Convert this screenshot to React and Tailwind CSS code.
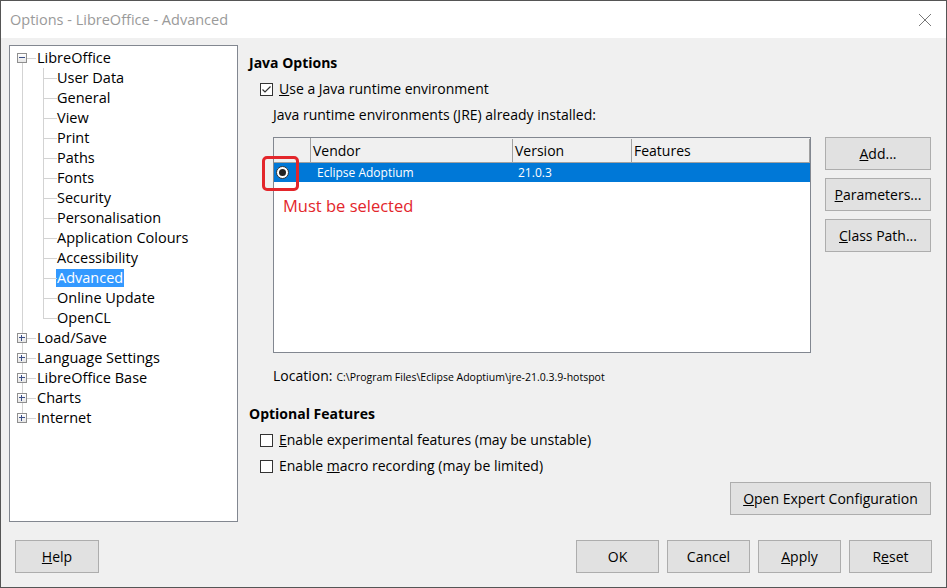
import React from "react"

const font = { fontFamily: '"Segoe UI", "Open Sans", "Noto Sans", sans-serif' }

const tree = [
  { label: "LibreOffice", top: true, open: true, first: true },
  { label: "User Data" },
  { label: "General" },
  { label: "View" },
  { label: "Print" },
  { label: "Paths" },
  { label: "Fonts" },
  { label: "Security" },
  { label: "Personalisation" },
  { label: "Application Colours" },
  { label: "Accessibility" },
  { label: "Advanced", selected: true },
  { label: "Online Update" },
  { label: "OpenCL", lastChild: true },
  { label: "Load/Save", top: true },
  { label: "Language Settings", top: true },
  { label: "LibreOffice Base", top: true },
  { label: "Charts", top: true },
  { label: "Internet", top: true, last: true },
]

function ExpandBox({ open }) {
  return (
    <div className="absolute left-[7px] top-[5px] w-[10px] h-[10px] border border-[#8f8f8f] bg-gradient-to-b from-white to-[#e6e6e6] flex items-center justify-center">
      <div className="relative w-[6px] h-[6px]">
        <div className="absolute left-0 top-[2px] w-[6px] h-[1px] bg-[#3b4f87]" />
        {!open && <div className="absolute left-[2px] top-0 w-[1px] h-[6px] bg-[#3b4f87]" />}
      </div>
    </div>
  )
}

function TreeRow({ item }) {
  const line = "absolute bg-[#d3d3d3]"
  return (
    <div className="flex h-[20px] items-center">
      <div className="relative w-[27px] h-[20px] shrink-0">
        {item.top ? (
          <>
            {!item.first && <div className={`${line} left-[12px] top-0 w-[1px] h-[5px]`} />}
            {!item.last && <div className={`${line} left-[12px] top-[15px] w-[1px] h-[5px]`} />}
            <div className={`${line} left-[17px] top-[10px] w-[9px] h-[1px]`} />
            <ExpandBox open={item.open} />
          </>
        ) : (
          <div className={`${line} left-[12px] top-0 w-[1px] h-[20px]`} />
        )}
      </div>
      {item.top ? (
        <span className="text-[14.5px] leading-[20px] text-black">{item.label}</span>
      ) : (
        <>
          <div className="relative w-[20px] h-[20px] shrink-0">
            <div className={`${line} left-[6px] top-0 w-[1px] ${item.lastChild ? "h-[11px]" : "h-[20px]"}`} />
            <div className={`${line} left-[6px] top-[10px] w-[14px] h-[1px]`} />
          </div>
          <span
            className={`text-[14.5px] leading-[18px] px-[1px] -ml-[1px] ${
              item.selected ? "bg-[#3399ff] text-white" : "text-black"
            }`}
          >
            {item.label}
          </span>
        </>
      )}
    </div>
  )
}

function CheckBox({ checked }) {
  return (
    <div className="w-[13px] h-[13px] border border-[#333] bg-white flex items-center justify-center shrink-0">
      {checked && (
        <svg width="11" height="11" viewBox="0 0 11 11">
          <path d="M1.5 5.5 L4 8 L9.5 2.5" fill="none" stroke="#333" strokeWidth="1.2" />
        </svg>
      )}
    </div>
  )
}

function Btn({ children, className = "" }) {
  return (
    <button
      className={`h-[33px] bg-[#e1e1e1] border border-[#adadad] text-[14px] text-black flex items-center justify-center ${className}`}
    >
      {children}
    </button>
  )
}

export default function App() {
  return (
    <div style={font} className="w-[947px] h-[588px] border border-[#555] bg-[#f0f0f0] flex flex-col overflow-hidden">
      {/* title bar */}
      <div className="h-[37px] bg-white flex items-center justify-between pl-[9px] pr-[14px] shrink-0">
        <span className="text-[14.5px] text-[#9a9a9a]">Options - LibreOffice - Advanced</span>
        <svg width="14" height="14" viewBox="0 0 14 14">
          <path d="M1 1 L13 13 M13 1 L1 13" stroke="#777" strokeWidth="1" />
        </svg>
      </div>

      <div className="flex-1 flex flex-col pt-[7px] pl-[8px] pr-[14px]">
        <div className="flex">
          {/* tree */}
          <div className="w-[229px] h-[477px] border border-[#828790] bg-white pt-[2px] shrink-0">
            {tree.map((item) => (
              <TreeRow key={item.label} item={item} />
            ))}
          </div>

          {/* right panel */}
          <div className="flex-1 pl-[11px] flex flex-col text-[14px] text-black">
            <div className="mt-[8px] font-bold leading-[20px]">Java Options</div>
            <div className="mt-[6px] ml-[11px] flex items-center gap-[6px] leading-[20px]">
              <CheckBox checked />
              <span>
                <u>U</u>se a Java runtime environment
              </span>
            </div>
            <div className="mt-[6px] ml-[24px] leading-[20px]">
              <u>J</u>ava runtime environments (JRE) already installed:
            </div>

            <div className="mt-[12px] ml-[24px] flex gap-[14px]">
              {/* table */}
              <div className="relative w-[538px] h-[216px] border border-[#828790] bg-white">
                <div className="flex h-[25px] bg-[#f0f0f0] border-b border-[#a0a0a0] text-[14px] leading-[24px] pt-[1px]">
                  <div className="w-[37px] border-r border-[#a0a0a0] -mt-[1px]" />
                  <div className="w-[202px] pl-[2px] border-r border-[#a0a0a0]">Vendor</div>
                  <div className="w-[119px] pl-[2px] border-r border-[#a0a0a0]">Version</div>
                  <div className="w-[178px] pl-[2px] border-r border-[#a0a0a0]">Features</div>
                </div>
                <div className="flex h-[19px] bg-[#0078d7] text-white text-[12px] items-center">
                  <div className="w-[37px] pl-[2px] flex items-center">
                    <div className="w-[13px] h-[13px] rounded-full border border-[#333] bg-white flex items-center justify-center">
                      <div className="w-[7px] h-[7px] rounded-full bg-[#222]" />
                    </div>
                  </div>
                  <div className="w-[202px] pl-[6px]">Eclipse Adoptium</div>
                  <div className="w-[119px] pl-[5px]">21.0.3</div>
                </div>
                <div className="mt-[13px] ml-[9px] text-[16.5px] leading-[22px] text-[#e3262b]">Must be selected</div>
                {/* annotation */}
                <div className="absolute left-[-12px] top-[18px] w-[37px] h-[35px] border-[3px] border-[#e3262b] rounded-[5px]" />
              </div>

              {/* side buttons */}
              <div className="flex flex-col gap-[8px]">
                <Btn className="w-[106px]">
                  <span>
                    <u>A</u>dd...
                  </span>
                </Btn>
                <Btn className="w-[106px]">
                  <span>
                    <u>P</u>arameters...
                  </span>
                </Btn>
                <Btn className="w-[106px]">
                  <span>
                    <u>C</u>lass Path...
                  </span>
                </Btn>
              </div>
            </div>

            <div className="mt-[13px] ml-[24px] leading-[20px] flex items-baseline gap-[4px]">
              <span>Location:</span>
              <span className="text-[10.5px]">C:\Program Files\Eclipse Adoptium\jre-21.0.3.9-hotspot</span>
            </div>

            <div className="mt-[17px] font-bold leading-[20px]">Optional Features</div>
            <div className="mt-[6px] ml-[11px] flex items-center gap-[6px] leading-[20px]">
              <CheckBox />
              <span>
                <u>E</u>nable experimental features (may be unstable)
              </span>
            </div>
            <div className="mt-[6px] ml-[11px] flex items-center gap-[6px] leading-[20px]">
              <CheckBox />
              <span>
                Enable <u>m</u>acro recording (may be limited)
              </span>
            </div>
            <div className="mt-[6px] mr-[1px] flex justify-end">
              <Btn className="w-[201px]">
                <span>
                  <u>O</u>pen Expert Configuration
                </span>
              </Btn>
            </div>
          </div>
        </div>

        {/* bottom buttons */}
        <div className="mt-[18px] flex pl-[6px]">
          <Btn className="w-[84px]">
            <span>
              <u>H</u>elp
            </span>
          </Btn>
          <div className="flex-1" />
          <div className="flex gap-[8px]">
            <Btn className="w-[83px]">OK</Btn>
            <Btn className="w-[83px]">Cancel</Btn>
            <Btn className="w-[83px]">
              <span>
                <u>A</u>pply
              </span>
            </Btn>
            <Btn className="w-[83px]">
              <span>
                R<u>e</u>set
              </span>
            </Btn>
          </div>
        </div>
      </div>
    </div>
  )
}
